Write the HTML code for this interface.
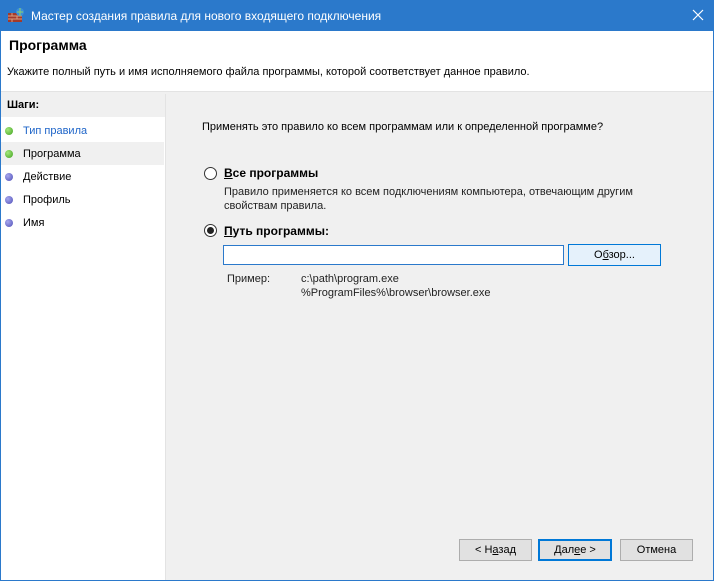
<!DOCTYPE html>
<html><head><meta charset="utf-8"><style>
body{margin:0;width:714px;height:581px;overflow:hidden;font-family:"Liberation Sans","DejaVu Sans",sans-serif;font-size:11px;color:#000;background:#f0f0f0;position:relative}
.a{position:absolute}
.t{position:absolute;white-space:nowrap;line-height:16px}
.btn{position:absolute;height:20px;background:#e1e1e1;border:1px solid #adadad;text-align:center;line-height:21px;font-size:11px}
.dot{position:absolute;left:5px;width:8px;height:8px;border-radius:50%}
.g{background:radial-gradient(circle at 35% 35%,#a6e87c,#3fa21f)}
.p{background:radial-gradient(circle at 35% 35%,#a8a8ee,#4f4fb8)}
</style></head><body>
<div class="a" style="left:0;top:0;width:714px;height:31px;background:#2b79cb"></div>
<svg class="a" style="left:7px;top:7px" width="18" height="16"><rect x="1" y="6" width="14" height="9" fill="#a33a2a"/><path d="M1 9h14M1 12h14M5 6v3M10 9v3M5 12v3" stroke="#d8a080" stroke-width="1"/><circle cx="13" cy="5" r="4" fill="#3b8fd8"/><path d="M10 5h6M13 1v8" stroke="#8fd06a" stroke-width="1"/></svg>
<div class="t" style="left:31px;top:8px;color:#fff;font-size:12px">Мастер создания правила для нового входящего подключения</div>
<svg class="a" style="left:692px;top:9px" width="12" height="12"><path d="M1 1L11 11M11 1L1 11" stroke="#fff" stroke-width="1.2"/></svg>
<div class="a" style="left:0;top:31px;width:1px;height:550px;background:#2b79cb"></div>
<div class="a" style="left:713px;top:31px;width:1px;height:550px;background:#2b79cb"></div>
<div class="a" style="left:0;top:580px;width:714px;height:1px;background:#2b79cb"></div>
<div class="a" style="left:1px;top:31px;width:712px;height:60px;background:#fff"></div>
<div class="a" style="left:1px;top:91px;width:712px;height:1px;background:#e3e3e3"></div>
<div class="t" style="left:9px;top:37px;font-size:14px;font-weight:bold">Программа</div>
<div class="t" style="left:7px;top:64px">Укажите полный путь и имя исполняемого файла программы, которой соответствует данное правило.</div>
<div class="a" style="left:1px;top:94px;width:164px;height:486px;background:#fff;border-right:1px solid #e3e3e3"></div>
<div class="a" style="left:1px;top:94px;width:164px;height:23px;background:#f0f0f0"></div>
<div class="t" style="left:7px;top:97px;font-weight:bold">Шаги:</div>
<div class="a" style="left:1px;top:142px;width:163px;height:23px;background:#f0f0f0"></div>
<div class="dot g" style="top:127px"></div><div class="t" style="left:23px;top:123px;color:#1d64c8">Тип правила</div>
<div class="dot g" style="top:150px"></div><div class="t" style="left:23px;top:146px">Программа</div>
<div class="dot p" style="top:173px"></div><div class="t" style="left:23px;top:169px">Действие</div>
<div class="dot p" style="top:196px"></div><div class="t" style="left:23px;top:192px">Профиль</div>
<div class="dot p" style="top:219px"></div><div class="t" style="left:23px;top:215px">Имя</div>
<div class="t" style="left:202px;top:119px">Применять это правило ко всем программам или к определенной программе?</div>
<div class="a" style="left:204px;top:167px;width:11px;height:11px;border:1px solid #333;border-radius:50%;background:#fff"></div>
<div class="t" style="left:224px;top:165px;font-weight:bold;font-size:12px"><u>В</u>се программы</div>
<div class="t" style="left:224px;top:184px;color:#222">Правило применяется ко всем подключениям компьютера, отвечающим другим</div>
<div class="t" style="left:224px;top:198px;color:#222">свойствам правила.</div>
<div class="a" style="left:204px;top:224px;width:11px;height:11px;border:1px solid #333;border-radius:50%;background:#fff"></div>
<div class="a" style="left:207px;top:227px;width:7px;height:7px;border-radius:50%;background:#222"></div>
<div class="t" style="left:224px;top:223px;font-weight:bold;font-size:12px"><u>П</u>уть программы:</div>
<div class="a" style="left:223px;top:245px;width:339px;height:18px;background:#fff;border:1px solid #2b79cb"></div>
<div class="btn" style="left:568px;top:244px;width:91px;background:#e5f1fb;border-color:#0078d7">О<u>б</u>зор...</div>
<div class="t" style="left:227px;top:271px;color:#222">Пример:</div>
<div class="t" style="left:301px;top:271px;color:#222">c:\path\program.exe</div>
<div class="t" style="left:301px;top:285px;color:#222">%ProgramFiles%\browser\browser.exe</div>
<div class="btn" style="left:459px;top:539px;width:71px">&lt; Н<u>а</u>зад</div>
<div class="btn" style="left:538px;top:539px;width:70px;border:2px solid #0078d7;height:18px;line-height:19px">Дал<u>е</u>е &gt;</div>
<div class="btn" style="left:620px;top:539px;width:71px">Отмена</div>
</body></html>
